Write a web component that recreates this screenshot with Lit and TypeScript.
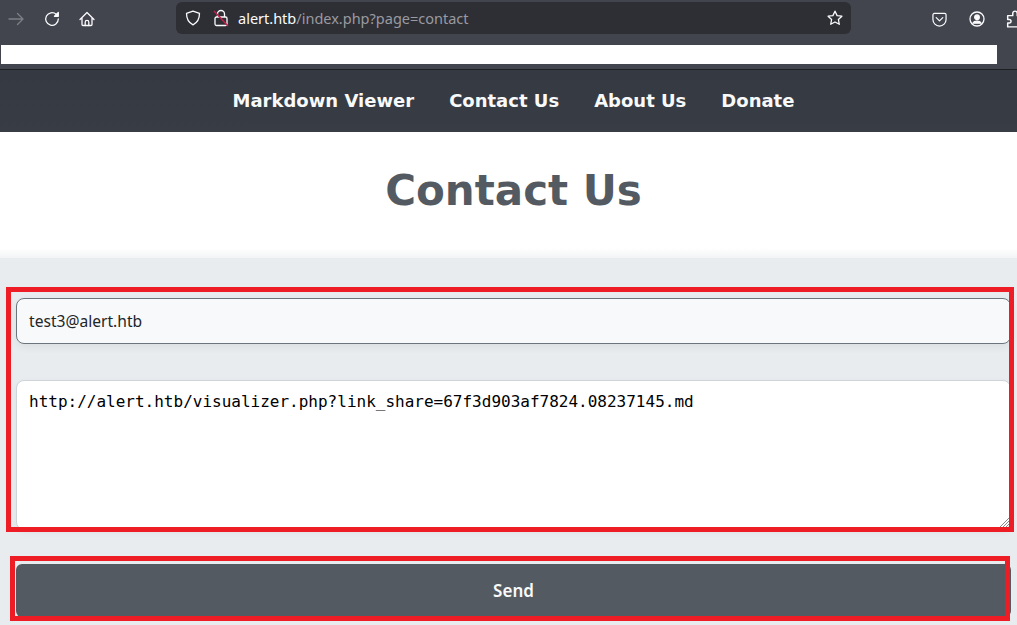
import { LitElement, html, css, svg } from "lit";
import { customElement } from "lit/decorators.js";

const stroke = "#fbfbfe";

@customElement("app-root")
export class AppRoot extends LitElement {
  static styles = css`
    :host { display: block; width: 1017px; height: 625px; overflow: hidden; position: relative; background: #e9ecef; }
    * { box-sizing: border-box; }
    .chrome { height: 45px; background: #42454e; display: flex; align-items: flex-start; position: relative; }
    .navbtns { display: flex; flex: none; width: 176px; height: 36px; padding: 2px 0 0 8px; gap: 19.500px; align-items: center; }
    .navbtns svg, .tools svg, .urlbar svg { display: block; flex: none; }
    .urlbar { flex: none; margin-top: 2px; width: 675px; height: 32px; background: #2e2f35; border-radius: 6px; display: flex; align-items: center; padding: 0 8px 0 9px; }
    .url { font: 14.500px "Noto Sans", sans-serif; color: #fbfbfe; margin-left: 9px; flex: 1; white-space: nowrap; }
    .url span { color: #9a9aa0; }
    .tools { display: flex; flex: none; align-items: center; gap: 21.500px; margin-left: 81px; padding-top: 10px; }
    .strip { height: 24px; background: #42454e; }
    .white { width: 996px; height: 19px; margin-left: 1px; background: #fff; }
    .page-top { height: 1px; background: #1d1f22; }
    nav { height: 62px; background: linear-gradient(#353941, #383c44); display: flex; justify-content: center; align-items: center; gap: 35px; padding: 0 0 2px 10px; }
    nav a { font: bold 18px "DejaVu Sans", sans-serif; color: #f8f9fa; }
    header { height: 126px; background: linear-gradient(#fff 116px, #f3f4f5); display: flex; justify-content: center; align-items: center; position: relative; padding-left: 10px; }
    h1 { margin: 0; font: bold 42px "DejaVu Sans", sans-serif; color: #545a62; padding-bottom: 10px; }
    form { padding: 40px 0 0 16px; display: flex; flex-direction: column; }
    .input { width: 995px; height: 46px; background: #f8f9fa; border: 1px solid #6c757d; border-radius: 8px; box-shadow: 0 3px 8px rgba(0,0,0,.06); font: 15.600px "Noto Sans", sans-serif; color: #212529; display: flex; align-items: center; padding: 0 0 1px 12px; }
    .area { margin-top: 36px; width: 995px; height: 150px; background: #fff; border: 1px solid #ced4da; border-radius: 8px; font: 16px "DejaVu Sans Mono", monospace; color: #000; padding: 11px 12px; position: relative; box-shadow: 0 2px 6px rgba(0,0,0,.05); }
    .grip { position: absolute; right: 0; bottom: 0; }
    button { margin-top: 34px; width: 995px; height: 53px; border: 0; border-radius: 6px; background: #545a62; color: #f8f9fa; font: 600 17px "Noto Sans", sans-serif; padding: 0 0 1px; }
    .mark { position: absolute; border: 5px solid #ee1c25; pointer-events: none; }
    .m1 { left: 6px; top: 287px; width: 1008px; height: 245px; }
    .m2 { left: 10px; top: 556px; width: 1000px; height: 65px; }
  `;

  private icon(w: number, body: unknown) {
    return html`<svg width="${w}" height="${w}" viewBox="0 0 16 16" fill="none" stroke="${stroke}" stroke-width="1.300" stroke-linecap="round" stroke-linejoin="round">${body}</svg>`;
  }

  render() {
    return html`
      <div class="chrome">
        <div class="navbtns">
          <svg width="16" height="16" viewBox="0 0 16 16" fill="none" stroke="#7d7f86" stroke-width="1.300" stroke-linecap="round" stroke-linejoin="round">${svg`<path d="M1 8h14M9.500 2.500 15 8l-5.500 5.500"/>`}</svg>
          ${this.icon(16, svg`<path d="M14.300 8a6.300 6.300 0 1 1-2.100-4.700"/><path d="M14.300 1.500v3.800h-3.800z" fill="${stroke}"/>`)}
          ${this.icon(16, svg`<path d="M1 8.500 8 1.500l7 7M3 6.800v6.700a1 1 0 0 0 1 1h8a1 1 0 0 0 1-1V6.800"/><path d="M6.200 14.500v-3.300a1.800 1.800 0 0 1 3.600 0v3.300"/>`)}
        </div>
        <div class="urlbar">
          ${this.icon(16, svg`<path d="M8 1.200 14.500 3.300c0 5.700-2.100 9.400-6.500 11.500-4.400-2.100-6.500-5.800-6.500-11.500z"/>`)}
          <svg style="margin-left:12px" width="16" height="18" viewBox="0 0 16 18" fill="none">
            <path d="M4.500 8V5a3.500 3.500 0 0 1 7 0v3" stroke="${stroke}" stroke-width="1.300"/>
            <rect x="2" y="8" width="12" height="8.500" rx="1.500" stroke="${stroke}" stroke-width="1.300"/>
            <path d="M1 2 15 17" stroke="#c2204a" stroke-width="1.500"/>
          </svg>
          <div class="url">alert.htb<span>/index.php?page=contact</span></div>
          ${this.icon(16, svg`<path d="M8 1.200l2.100 4.400 4.800.6-3.500 3.300.9 4.800L8 12l-4.300 2.300.9-4.800L1.100 6.200l4.800-.6z"/>`)}
        </div>
        <div class="tools">
          ${this.icon(15, svg`<path d="M2.500 1.500h11A1.500 1.500 0 0 1 15 3V8a7 7 0 0 1-14 0V3A1.500 1.500 0 0 1 2.500 1.500z"/><path d="M4.500 6l3.500 3.500L11.500 6"/>`)}
          ${this.icon(16, svg`<circle cx="8" cy="8" r="7"/><circle cx="8" cy="6.200" r="2.300" fill="${stroke}"/><path d="M3.800 12.200c.8-1.500 2.200-2 4.200-2s3.400.5 4.200 2z" fill="${stroke}"/>`)}
          ${this.icon(18, svg`<path d="M1.500 15V11.500H3a1.500 1.500 0 0 0 0-3H1.500V5h4.500V3a2 2 0 0 1 4 0v2h4.500v10z"/>`)}
        </div>
      </div>
      <div class="strip"><div class="white"></div></div>
      <div class="page-top"></div>
      <nav><a>Markdown Viewer</a><a>Contact Us</a><a>About Us</a><a>Donate</a></nav>
      <header><h1>Contact Us</h1></header>
      <form>
        <div class="input">test3@alert.htb</div>
        <div class="area">http://alert.htb/visualizer.php?link_share=67f3d903af7824.08237145.md
          <svg class="grip" width="12" height="12" viewBox="0 0 12 12" stroke="#8a8a8a" stroke-width="1"><path d="M11 1 1 11M11 4l-7 7M11 7l-4 4M11 10l-1 1"/></svg>
        </div>
        <button type="button">Send</button>
      </form>
      <div class="mark m1"></div>
      <div class="mark m2"></div>
    `;
  }
}
